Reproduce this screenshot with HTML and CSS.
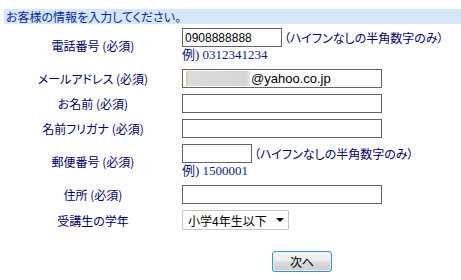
FILE: index.html
```html
<!DOCTYPE html>
<html lang="ja">
<head>
    <meta charset="UTF-8">
    <title>お客様情報入力</title>
    <link rel="stylesheet" href="styles.css">
</head>
<body>
    <h2 class="form-title">お客様の情報を入力してください。</h2>

    <form class="entry-form">
        <div class="form-grid">
            <label class="label">電話番号 (必須)</label>
            <div class="field">
                <div class="line">
                    <input class="text-box short" type="text" value="0908888888">
                    <span class="note">（ハイフンなしの半角数字のみ）</span>
                </div>
                <div class="example">例) 0312341234</div>
            </div>

            <label class="label">メールアドレス (必須)</label>
            <div class="field">
                <div class="text-box wide mail-box"><span class="masked"></span>@yahoo.co.jp</div>
            </div>

            <label class="label">お名前 (必須)</label>
            <div class="field">
                <input class="text-box wide" type="text">
            </div>

            <label class="label">名前フリガナ (必須)</label>
            <div class="field">
                <input class="text-box wide" type="text">
            </div>

            <label class="label">郵便番号 (必須)</label>
            <div class="field">
                <div class="line">
                    <input class="text-box zip" type="text">
                    <span class="note">（ハイフンなしの半角数字のみ）</span>
                </div>
                <div class="example">例) 1500001</div>
            </div>

            <label class="label">住所 (必須)</label>
            <div class="field">
                <input class="text-box wide" type="text">
            </div>

            <label class="label">受講生の学年</label>
            <div class="field">
                <div class="select-wrap">
                    <select class="grade">
                        <option>小学4年生以下</option>
                        <option>小学5年生</option>
                        <option>小学6年生</option>
                    </select>
                </div>
            </div>

            <div></div>
            <div class="actions">
                <button class="next-btn" type="button">次へ</button>
            </div>
        </div>
    </form>
</body>
</html>
```

FILE: styles.css
```css
body {
    margin: 9px 0 0 4px;
    font-family: "Noto Sans CJK JP", "Liberation Sans", sans-serif;
    font-feature-settings: "palt";
    font-size: 12px;
    color: #000066;
    background-color: #ffffff;
}
.form-title {
    margin: 0;
    height: 15px;
    line-height: 15px;
    padding-left: 2px;
    background-color: #d5e7fb;
    color: #0a28a0;
    font-size: 12px;
    font-weight: normal;
}
.entry-form {
    margin-top: 4px;
}
.form-grid {
    display: grid;
    grid-template-columns: 178px 240px;
    row-gap: 6px;
}
.label {
    align-self: center;
    text-align: center;
    line-height: 15px;
    white-space: nowrap;
}
.field {
    display: flex;
    flex-direction: column;
}
.line {
    display: flex;
    align-items: center;
    height: 19px;
    white-space: nowrap;
}
.text-box {
    box-sizing: border-box;
    height: 19px;
    margin: 0;
    padding: 0 2px;
    border: 1px solid #646464;
    font-family: "Liberation Sans", Arial, sans-serif;
    font-size: 12px;
    color: #000000;
    background-color: #ffffff;
    flex-shrink: 0;
}
.short {
    width: 100px;
}
.wide {
    width: 200px;
}
.zip {
    width: 70px;
}
.note {
    margin-left: 2px;
    line-height: 15px;
}
.example {
    height: 16px;
    line-height: 16px;
    font-family: "Liberation Serif", "Noto Sans CJK JP", serif;
    font-size: 13px;
    color: #0a1a80;
}
.mail-box {
    display: flex;
    align-items: center;
    padding-left: 3px;
    line-height: 17px;
    font-size: 13px;
}
.masked {
    display: inline-block;
    width: 64px;
    height: 15px;
    margin-right: 1px;
    background: linear-gradient(90deg, #f2c48a 0, #f2c48a 1px, #dcdcdc 2px, #d6d6d6 60px, #e6e6e6 64px);
}
.select-wrap {
    position: relative;
    width: 107px;
}
.grade {
    appearance: none;
    -webkit-appearance: none;
    box-sizing: border-box;
    width: 107px;
    height: 20px;
    margin: 0;
    padding: 0 0 0 5px;
    border: 1px solid #c6c9d2;
    border-radius: 0;
    background-color: #ffffff;
    font-family: "Noto Sans CJK JP", sans-serif;
    font-feature-settings: normal;
    font-size: 12px;
    color: #000000;
}
.select-wrap::after {
    content: "";
    position: absolute;
    right: 5px;
    top: 8px;
    border-left: 4px solid transparent;
    border-right: 4px solid transparent;
    border-top: 4px solid #000000;
    pointer-events: none;
}
.actions {
    display: flex;
    justify-content: center;
    margin-top: 15px;
}
.next-btn {
    box-sizing: border-box;
    width: 60px;
    height: 21px;
    padding: 0;
    border: 1px solid #3c8fd0;
    border-radius: 3px;
    box-shadow: inset 0 0 0 1px #e4f4fc;
    background: linear-gradient(#f4f4f4 0, #ececec 48%, #dcdcdc 52%, #cecece 100%);
    font-family: "Noto Sans CJK JP", sans-serif;
    font-size: 12px;
    color: #000000;
    line-height: 17px;
}
```
